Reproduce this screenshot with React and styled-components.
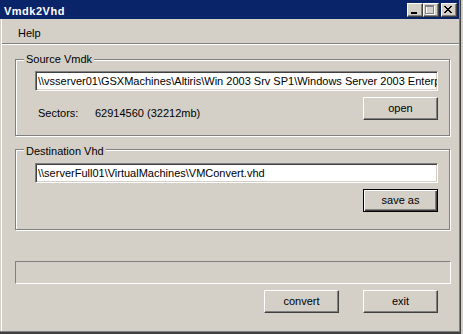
import React from 'react';
import styled, { createGlobalStyle, css } from 'styled-components';

const C = {
  face: '#D4D0C8',
  shadow: '#808080',
  dark: '#404040',
  hi: '#FFFFFF',
  title: '#0A246A',
};

const FONT = '"Liberation Sans", Arial, sans-serif';

const Global = createGlobalStyle`
  html, body { margin: 0; padding: 0; background: ${C.face}; }
  body { font-family: ${FONT}; font-size: 11px; color: #000; }
  * { box-sizing: border-box; }
`;

const Frame = styled.div`
  width: 461px;
  height: 334px;
  display: flex;
  flex-direction: column;
  background: ${C.face};
  border-right: 1px solid ${C.dark};
  border-bottom: 2px solid ${C.dark};
`;

const Inner = styled.div`
  flex: 1;
  min-height: 0;
  display: flex;
  flex-direction: column;
  border-right: 1px solid ${C.shadow};
  border-bottom: 1px solid ${C.shadow};
`;

const TitleBar = styled.div`
  flex: none;
  height: 19px;
  background: ${C.title};
  display: flex;
  align-items: center;
  padding: 0 2px 0 4px;
`;

const Title = styled.span`
  flex: 1;
  color: #fff;
  font-weight: bold;
  font-size: 11px;
  letter-spacing: 0.5px;
  line-height: 13px;
  padding-top: 3px;
`;

const CapButton = styled.div`
  width: 16px;
  height: 14px;
  margin-left: ${(p) => (p.$gap ? 2 : 0)}px;
  background: ${C.face};
  border: 1px solid;
  border-color: ${C.hi} ${C.dark} ${C.dark} ${C.hi};
  box-shadow: inset -1px -1px ${C.shadow};
  display: flex;
  align-items: flex-start;
  justify-content: flex-start;
  svg { display: block; }
`;

const Body = styled.div`
  flex: 1;
  min-height: 0;
  display: flex;
  flex-direction: column;
  margin-left: 1px;
  border-left: 1px solid ${C.hi};
`;

const MenuBar = styled.div`
  flex: none;
  height: 24px;
  padding: 8px 0 0 16px;
  display: flex;
  align-items: flex-start;
`;

const MenuItem = styled.span`
  line-height: 13px;
`;

const Separator = styled.div`
  flex: none;
  height: 2px;
  border-top: 1px solid ${C.shadow};
  border-bottom: 1px solid ${C.hi};
`;

const Client = styled.div`
  flex: 1;
  display: flex;
  flex-direction: column;
  align-items: flex-start;
  padding-left: 13px;
`;

const Group = styled.div`
  position: relative;
  width: 435px;
  margin-top: ${(p) => p.$mt}px;
  padding: ${(p) => p.$pt}px 11px ${(p) => p.$pb}px 19px;
  border: 1px solid ${C.shadow};
  box-shadow: inset 1px 1px 0 ${C.hi}, 1px 1px 0 ${C.hi};
  display: flex;
  flex-direction: column;
  align-items: flex-start;
`;

const Legend = styled.span`
  position: absolute;
  top: ${(p) => p.$top}px;
  left: 8px;
  padding: 0 2px;
  line-height: 13px;
  background: ${C.face};
`;

const Field = styled.input`
  width: 403px;
  height: 20px;
  margin: 0;
  padding: 0 0 0 2px;
  border: 1px solid;
  border-color: ${C.shadow} ${C.hi} ${C.hi} ${C.shadow};
  box-shadow: inset 1px 1px ${C.dark}, inset -1px -1px ${C.face};
  background: #fff;
  color: #000;
  font: 11px ${FONT};
  outline: none;
`;

const Row = styled.div`
  width: 100%;
  margin-top: 6px;
  display: flex;
  align-items: flex-start;
`;

const Label = styled.span`
  width: ${(p) => p.$w || 'auto'};
  padding-left: ${(p) => p.$pl || 0}px;
  padding-top: 10px;
  line-height: 13px;
`;

const Button = styled.button`
  width: 75px;
  height: 23px;
  margin: 0 0 0 ${(p) => (p.$push ? 'auto' : '0')};
  padding: 0;
  background: ${C.face};
  color: #000;
  font: 11px ${FONT};
  line-height: 13px;
  border: 1px solid;
  border-color: ${C.hi} ${C.dark} ${C.dark} ${C.hi};
  box-shadow: inset -1px -1px ${C.shadow};
  ${(p) =>
    p.$default &&
    css`
      border-color: #000;
      box-shadow: inset 1px 1px ${C.hi}, inset -1px -1px ${C.dark}, inset -2px -2px ${C.shadow};
    `}
`;

const Progress = styled.div`
  width: 436px;
  height: 23px;
  margin-top: 31px;
  border: 1px solid;
  border-color: ${C.shadow} ${C.hi} ${C.hi} ${C.shadow};
`;

const Actions = styled.div`
  width: 435px;
  margin-top: 6px;
  padding-right: 12px;
  display: flex;
  justify-content: flex-end;
  gap: 24px;
`;

const MinGlyph = () => (
  <svg width="14" height="12" viewBox="0 0 14 12">
    <rect x="3" y="8" width="6" height="2" fill="#000" />
  </svg>
);

const MaxGlyph = () => (
  <svg width="14" height="12" viewBox="0 0 14 12">
    <g fill="none" stroke="#fff" strokeWidth="1">
      <rect x="2.5" y="2.5" width="8" height="8" />
    </g>
    <g fill="none" stroke="#808080" strokeWidth="1">
      <rect x="1.5" y="1.5" width="8" height="8" />
      <line x1="1" y1="2.5" x2="10" y2="2.5" />
    </g>
  </svg>
);

const X_ROWS = ['XX....XX', '.XX..XX.', '..XXXX..', '...XX...', '..XXXX..', '.XX..XX.', 'XX....XX'];

const CloseGlyph = () => (
  <svg width="14" height="12" viewBox="0 0 14 12">
    {X_ROWS.flatMap((row, y) =>
      row.split('').map((ch, x) =>
        ch === 'X' ? <rect key={`${x}-${y}`} x={x + 2} y={y + 2} width="1" height="1" fill="#000" /> : null
      )
    )}
  </svg>
);

export default function App() {
  return (
    <>
      <Global />
      <Frame>
        <Inner>
          <TitleBar>
            <Title>Vmdk2Vhd</Title>
            <CapButton>
              <MinGlyph />
            </CapButton>
            <CapButton>
              <MaxGlyph />
            </CapButton>
            <CapButton $gap>
              <CloseGlyph />
            </CapButton>
          </TitleBar>
          <Body>
            <MenuBar>
              <MenuItem>Help</MenuItem>
            </MenuBar>
            <Separator />
            <Client>
              <Group $mt={14} $pt={11} $pb={15}>
                <Legend $top={-7}>Source Vmdk</Legend>
                <Field
                  readOnly
                  value="\\vsserver01\GSXMachines\Altiris\Win 2003 Srv SP1\Windows Server 2003 Enterprise.vmdk"
                />
                <Row>
                  <Label $w="60px" $pl={3}>
                    Sectors:
                  </Label>
                  <Label>62914560 (32212mb)</Label>
                  <Button $push>open</Button>
                </Row>
              </Group>
              <Group $mt={13} $pt={13} $pb={17}>
                <Legend $top={-5}>Destination Vhd</Legend>
                <Field readOnly value="\\serverFull01\VirtualMachines\VMConvert.vhd" />
                <Row>
                  <Button $push $default>
                    save as
                  </Button>
                </Row>
              </Group>
              <Progress />
              <Actions>
                <Button>convert</Button>
                <Button>exit</Button>
              </Actions>
            </Client>
          </Body>
        </Inner>
      </Frame>
    </>
  );
}
